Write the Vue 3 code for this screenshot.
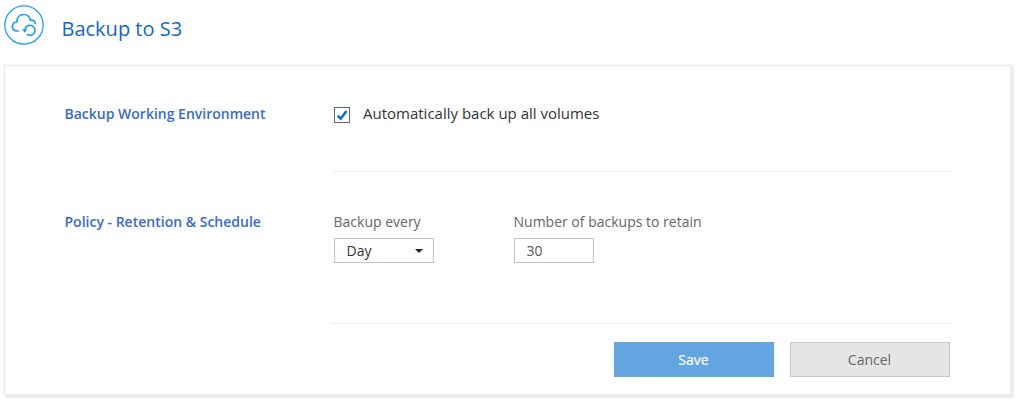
<script setup>
import { ref } from 'vue'

const backupAll = ref(true)
const retain = ref('30')
</script>

<template>
  <main class="page">
    <header class="header">
      <svg class="logo" width="40" height="40" viewBox="0 0 40 40" fill="none" stroke="#20a0f4">
        <circle cx="20" cy="20" r="19.2" stroke-width="1.3" />
        <path
          d="M15 26H13.2C10.2 26 8.4 24.1 8.4 21.6C8.4 18.9 10.3 17.2 12.8 17C13 12.6 15.6 9.5 19.6 9.5C23.2 9.5 25.7 11.6 26.4 15.1C29.4 14.7 31.1 16.4 31.4 19"
          stroke-width="1.7"
        />
        <path d="M20.9 25.4C21.2 22.2 23.3 20.3 25.9 20.3C28.8 20.3 31 22.5 31 25.3C31 28.2 28.8 30.3 26 30.3C24.7 30.3 23.6 29.9 22.8 29.1" stroke-width="1.7" />
        <path d="M18 24.2H23.4L20.8 27.8Z" fill="#20a0f4" stroke="none" />
      </svg>
      <h1 class="title">Backup to S3</h1>
    </header>

    <section class="panel">
      <div class="row first">
        <h2 class="heading">Backup Working Environment</h2>
        <label class="check">
          <input v-model="backupAll" class="native" type="checkbox" />
          <span class="box">
            <svg v-if="backupAll" width="14" height="14" viewBox="0 0 14 14" fill="none" stroke="#0b70d0" stroke-width="2.5">
              <path d="M2.6 7.8L5.7 10.6L11.5 3" />
            </svg>
          </span>
          <span class="check-text">Automatically back up all volumes</span>
        </label>
      </div>

      <div class="row second">
        <h2 class="heading policy">Policy - Retention &amp; Schedule</h2>
        <div class="field every">
          <span class="label">Backup every</span>
          <button class="control select" type="button">
            <span>Day</span>
            <svg width="8" height="4" viewBox="0 0 8 4"><path d="M0 0H8L4 4Z" fill="#222" /></svg>
          </button>
        </div>
        <div class="field">
          <span class="label">Number of backups to retain</span>
          <input v-model="retain" class="control number" type="text" />
        </div>
      </div>

      <footer class="actions">
        <button class="button save" type="button">Save</button>
        <button class="button cancel" type="button">Cancel</button>
      </footer>
    </section>
  </main>
</template>

<style>
body {
  background: #fff;
}
</style>

<style scoped>
.page {
  box-sizing: border-box;
  width: 1017px;
  height: 400px;
  overflow: hidden;
  font-family: 'Open Sans', 'Noto Sans', sans-serif;
  font-size: 14px;
  color: #666;
}
.header {
  display: flex;
  height: 66px;
  padding-left: 4px;
  box-sizing: border-box;
}
.logo {
  margin-top: 5px;
}
.title {
  margin: 15px 0 0 17.5px;
  font-size: 20px;
  line-height: 28px;
  font-weight: 400;
  color: #1268c4;
}
.panel {
  box-sizing: border-box;
  width: 1005px;
  height: 328px;
  margin-left: 5px;
  padding-left: 59.5px;
  background: #fff;
  box-shadow:
    0 0 0 1px #ececec,
    2px 2px 0 2px #eee,
    0 0 0 2px #f7f7f7;
}
.row {
  display: flex;
}
.first {
  height: 106px;
}
.heading {
  flex: none;
  width: 269.5px;
  margin: 38px 0 0;
  font-size: 14px;
  line-height: 20px;
  font-weight: 600;
  color: #3a6bc8;
}
.check {
  box-sizing: border-box;
  display: flex;
  width: 618px;
  flex: none;
  height: 106px;
  border-bottom: 1px solid #ebebeb;
}
.native {
  position: absolute;
  opacity: 0;
  pointer-events: none;
}
.box {
  box-sizing: border-box;
  width: 16px;
  height: 16px;
  margin-top: 41px;
  border: 1px solid #666;
}
.box svg {
  display: block;
}
.check-text {
  margin: 37px 0 0 13px;
  font-size: 15px;
  line-height: 20px;
  color: #333;
}
.second {
  height: 151px;
}
.policy {
  margin-top: 40px;
}
.field {
  display: flex;
  flex-direction: column;
  padding-top: 40px;
}
.every {
  width: 180px;
}
.label {
  line-height: 20px;
  margin: 0 0 6px -0.5px;
}
.control {
  box-sizing: border-box;
  height: 25px;
  border: 1px solid #c4c4c4;
  border-radius: 0;
  background: #fff;
  padding: 0 10px 0 11.5px;
  font: inherit;
  line-height: 23px;
}
.select {
  display: flex;
  align-items: center;
  justify-content: space-between;
  width: 100px;
  color: #333;
}
.number {
  width: 80px;
  color: #555;
}
.actions {
  display: flex;
  justify-content: flex-end;
  gap: 16px;
  width: 619px;
  margin-left: 266.5px;
  box-sizing: border-box;
  border-top: 1px solid #ebebeb;
  padding-top: 18px;
}
.button {
  box-sizing: border-box;
  width: 160px;
  height: 35px;
  padding: 0 1px 0 0;
  border: 1px solid #c6c6c6;
  border-radius: 0;
  background: #e5e5e5;
  font: inherit;
  color: #666;
}
.save {
  border-color: #62a5e0;
  background: #62a5e0;
  color: #fff;
  -webkit-text-stroke: 0.2px #fff;
}
</style>
